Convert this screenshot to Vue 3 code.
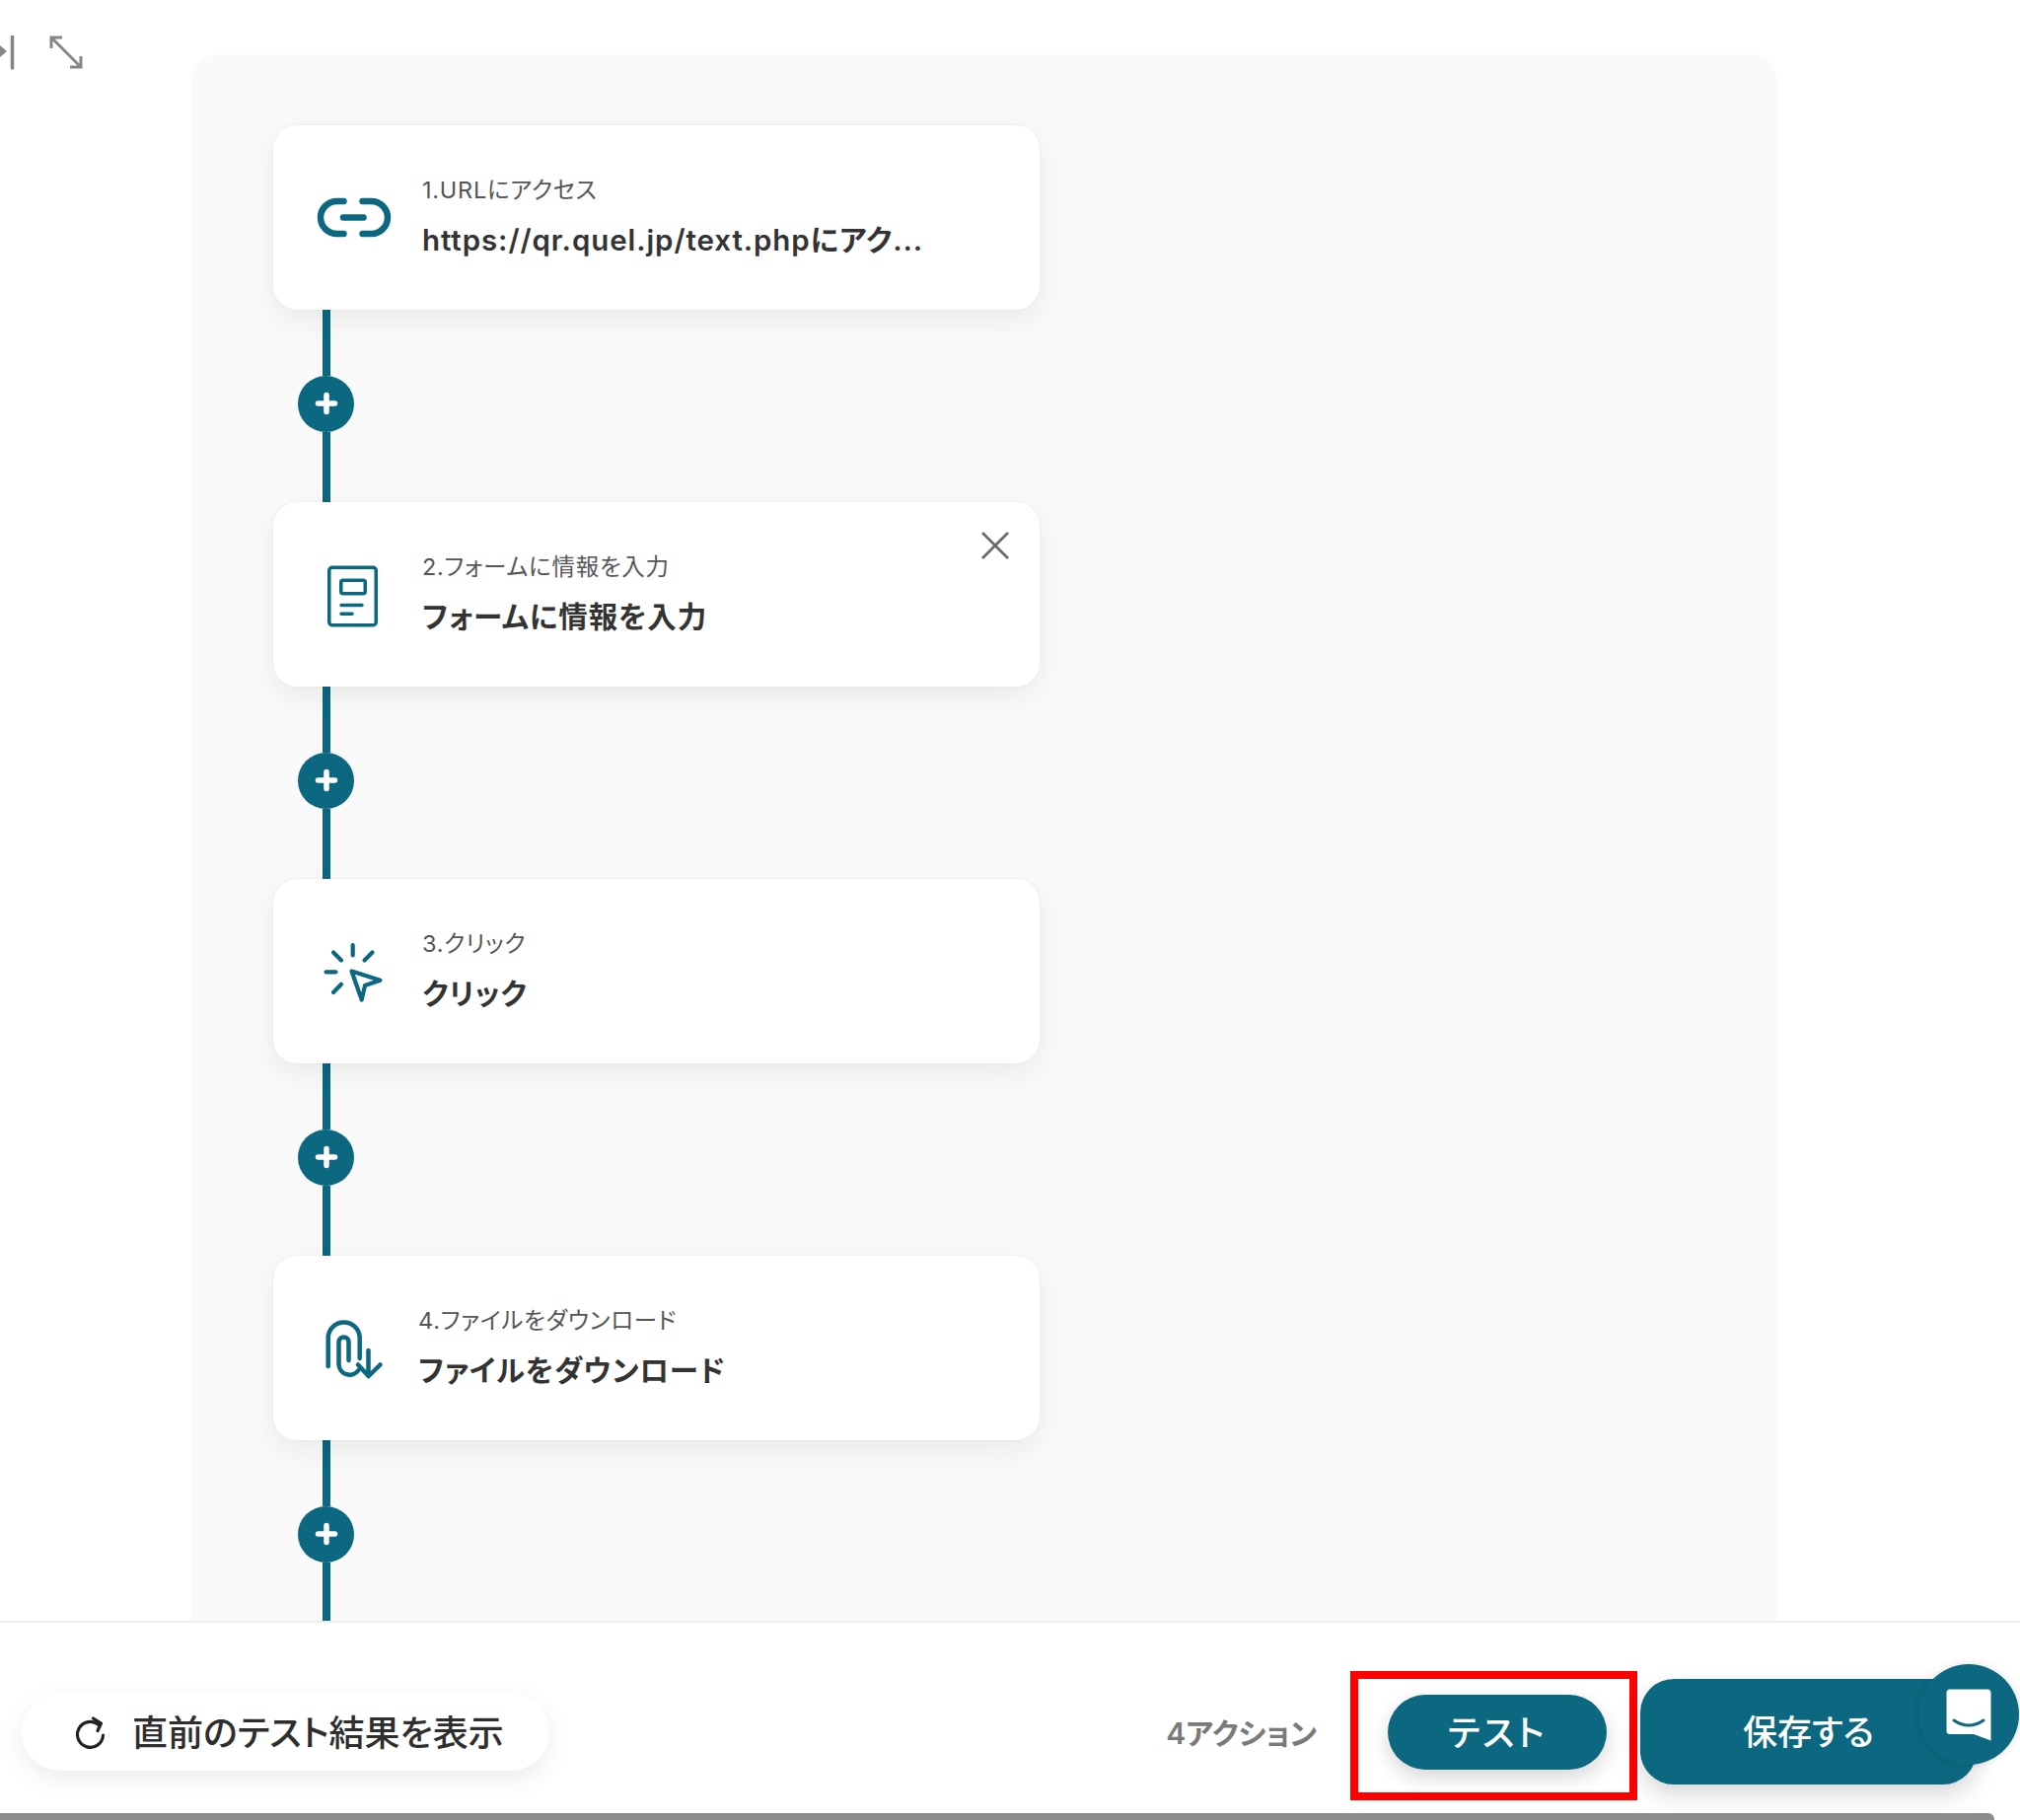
<script setup>
const steps = [
  { id: 1, label: '1.URLにアクセス', title: 'https://qr.quel.jp/text.phpにアク...' },
  { id: 2, label: '2.フォームに情報を入力', title: 'フォームに情報を入力', closable: true },
  { id: 3, label: '3.クリック', title: 'クリック' },
  { id: 4, label: '4.ファイルをダウンロード', title: 'ファイルをダウンロード', tight: true },
]
</script>

<template>
  <div class="page">
    <main class="canvas">
      <div class="tools">
        <svg class="tool-icons" width="84" height="36" viewBox="0 0 84 36" fill="none" stroke="#858585" stroke-width="3">
          <path d="M0 10 L7 16 L0 22 Z" fill="#858585" stroke="none" />
          <path d="M12.5 1 V33" stroke-width="3.5" stroke-linecap="round" />
          <path d="M52 2 L82 32 M52 13 V2 H63 M82 21 V32 H71" stroke-width="3" />
        </svg>
      </div>
      <section class="panel">
        <template v-for="step in steps" :key="step.id">
          <article class="card" :class="{ tight: step.tight }">
            <svg class="icon" width="80" height="80" viewBox="0 0 80 80" fill="none" stroke="#0b6880" stroke-linecap="round" stroke-linejoin="round">
              <g v-if="step.id === 1" stroke-width="6.5" transform="translate(-0.5 -1.5)">
                <path d="M29 24.5 H22 a16.5 16.5 0 0 0 0 33 H29" />
                <path d="M48 24.5 H57 a16.5 16.5 0 0 1 0 33 H48" />
                <path d="M28.5 41 H49" />
              </g>
              <g v-else-if="step.id === 2" stroke-width="3.5" transform="translate(0 -0.5)">
                <rect x="13.75" y="12.75" width="47.5" height="58.5" rx="3" />
                <rect x="25.75" y="25.75" width="24.5" height="13.5" rx="2" />
                <path d="M26 51 H47 M26 59.7 H37" />
              </g>
              <g v-else-if="step.id === 3" stroke-width="4.2">
                <path d="M37.7 13 V23.5 M18 20.5 L26 28.5 M57.5 20.5 L49.5 28.5 M10.5 40.3 H20.5 M18 61 L26 52.7" />
                <path d="M36.5 39.5 L65.5 48.7 L50 54 L46.7 68.5 Z" />
              </g>
              <g v-else stroke-width="4.5">
                <path d="M12.7 58 V29.5 a16 16 0 0 1 32 0 V50" />
                <path d="M33.5 52 V33.5 a5 5 0 0 0 -10 0 V56 a11 11 0 0 0 20 6" />
                <path d="M53.5 42 V68 M43 56.5 L53.7 68 L65.5 56.5" />
              </g>
            </svg>
            <div class="card-text">
              <p class="label">{{ step.label }}</p>
              <p class="title">{{ step.title }}</p>
            </div>
            <svg v-if="step.closable" class="close" width="28" height="28" viewBox="0 0 28 28" stroke="#6b6b6b" stroke-width="2.8" fill="none">
              <path d="M1 1 L27 27 M27 1 L1 27" />
            </svg>
          </article>
          <div class="connector">
            <span class="seg top"></span>
            <span class="add">
              <svg width="24" height="24" viewBox="0 0 24 24" stroke="#fff" stroke-width="5.5" stroke-linecap="round">
                <path d="M12 3.5 V20.5 M3.5 12 H20.5" />
              </svg>
            </span>
            <span class="seg rest"></span>
          </div>
        </template>
      </section>
    </main>

    <footer class="footer">
      <button class="latest">
        <svg width="32" height="34" viewBox="0 0 32 34" fill="none" stroke="#222" stroke-width="3.2" stroke-linecap="round" stroke-linejoin="round">
          <path d="M24 9.5 A13 13 0 1 0 28.5 20" />
          <path d="M18.5 3 L26.5 8 L23 15.5" />
        </svg>
        <span>直前のテスト結果を表示</span>
      </button>
      <span class="count">4アクション</span>
      <div class="highlight">
        <button class="test">テスト</button>
      </div>
      <button class="save">保存する</button>
      <div class="chat">
        <svg width="46" height="54" viewBox="0 0 46 54">
          <path d="M4 0.5 H42 a3.5 3.5 0 0 1 3.5 3.5 V52.5 L28 46 H4 a3.5 3.5 0 0 1 -3.5 -3.5 V4 A3.5 3.5 0 0 1 4 0.5 Z" fill="#fff" />
          <path d="M8 32 Q23 42 38 32" fill="none" stroke="#0b6880" stroke-width="3" stroke-linecap="round" />
        </svg>
      </div>
    </footer>
    <div class="scrollbar"></div>
  </div>
</template>

<style>
html, body { margin: 0; background: #fff; }
</style>

<style scoped>
.page {
  width: 2048px;
  height: 1845px;
  overflow: hidden;
  display: flex;
  flex-direction: column;
  font-family: Inter, "Noto Sans CJK JP", sans-serif;
  font-feature-settings: "palt";
  background: #fff;
}
.canvas {
  height: 1643px;
  flex: none;
  display: flex;
  overflow: hidden;
}
.tools {
  width: 195px;
  flex: none;
  padding-top: 36px;
  box-sizing: border-box;
}
.tool-icons { display: block; }
.panel {
  width: 1606px;
  flex: none;
  margin-top: 55px;
  padding: 72px 0 0 82px;
  box-sizing: border-box;
  background: #fafafa;
  border-radius: 24px 24px 0 0;
}
.card {
  position: relative;
  width: 777px;
  height: 187px;
  box-sizing: border-box;
  padding-left: 43px;
  display: flex;
  align-items: center;
  gap: 28px;
  background: #fff;
  border-radius: 24px;
  box-shadow: 0 0 2px rgba(0, 0, 0, .08), 0 10px 32px rgba(0, 0, 0, .07);
}
.card.tight { gap: 24px; }
.icon { flex: none; margin-top: 1px; }
.card-text {
  display: flex;
  flex-direction: column;
  gap: 17px;
  margin-top: -5px;
}
.label, .title { margin: 0; white-space: nowrap; }
.label {
  font-size: 23.5px;
  line-height: 32px;
  letter-spacing: .75px;
  color: #555;
}
.title {
  font-size: 29.5px;
  line-height: 34px;
  letter-spacing: .9px;
  font-weight: 600;
  color: #333;
}
.close { position: absolute; top: 30px; right: 31px; }
.connector {
  width: 57px;
  margin-left: 25px;
  display: flex;
  flex-direction: column;
  align-items: center;
}
.seg { width: 8px; background: #0b6880; display: block; }
.seg.top { height: 66.5px; }
.seg.rest { height: 71.5px; }
.add {
  width: 57px;
  height: 57px;
  border-radius: 50%;
  background: #0b6880;
  display: flex;
  align-items: center;
  justify-content: center;
}
.footer {
  position: relative;
  height: 195px;
  flex: none;
  box-sizing: border-box;
  border-top: 2px solid #eee;
  padding: 28px 44px 0 22px;
  display: flex;
  align-items: center;
}
button {
  border: 0;
  font-family: inherit;
  font-feature-settings: inherit;
  padding: 0;
}
.latest {
  width: 535px;
  height: 78px;
  margin-right: auto;
  border-radius: 39px;
  background: #fff;
  box-shadow: 0 8px 26px rgba(0, 0, 0, .08);
  display: flex;
  align-items: center;
  gap: 26px;
  padding: 0 0 4px 54px;
  box-sizing: border-box;
  font-size: 36px;
  font-weight: 500;
  color: #2e2e2e;
}
.latest svg { margin-top: 4px; }
.count {
  font-size: 30px;
  font-weight: 600;
  color: #7a7a7a;
  margin: 0 34px 2px 0;
}
.highlight {
  box-sizing: border-box;
  width: 291px;
  height: 131px;
  margin-top: 8px;
  margin-right: 3px;
  padding: 16px 23px 23px 30px;
  border: 8px solid #f00;
}
.test {
  display: block;
  width: 222px;
  height: 76px;
  padding-bottom: 4px;
  border-radius: 38px;
  background: #0b6880;
  color: #fff;
  font-size: 36px;
  font-weight: 500;
  letter-spacing: 2.5px;
  box-shadow: 0 8px 20px rgba(0, 0, 0, .16);
}
.save {
  width: 341px;
  height: 107px;
  padding-bottom: 4px;
  border-radius: 34px;
  background: #0b6880;
  color: #fff;
  font-size: 35px;
  font-weight: 500;
  box-shadow: 0 10px 24px rgba(0, 0, 0, .16);
}
.chat {
  position: absolute;
  left: 1945px;
  top: 42px;
  width: 102px;
  height: 102px;
  border-radius: 50%;
  background: #0b6880;
  box-shadow: 0 0 10px rgba(0, 0, 0, .12);
  display: flex;
  align-items: flex-start;
  justify-content: flex-start;
}
.chat svg { margin: 25px 0 0 28px; }
.scrollbar {
  height: 7px;
  flex: none;
  width: 2022px;
  background: #8c8c8c;
  border-top-right-radius: 6px;
}
</style>
